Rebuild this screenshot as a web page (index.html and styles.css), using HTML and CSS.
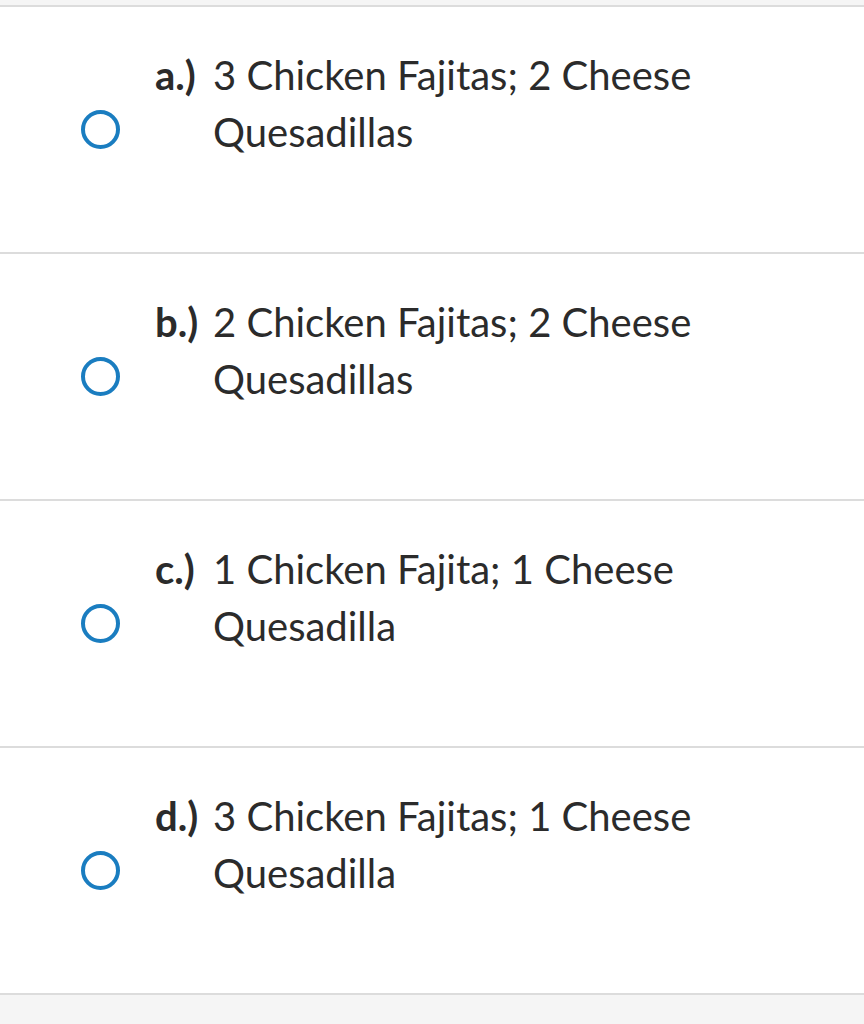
FILE: index.html
```html
<!DOCTYPE html>
<html>
<head>
<meta charset="utf-8">
<link rel="stylesheet" href="styles.css">
</head>
<body>
<div class="list">
  <div class="option">
    <span class="radio"></span>
    <div class="label"><span class="letter">a.)</span><span class="text">3 Chicken Fajitas; 2 Cheese Quesadillas</span></div>
  </div>
  <div class="option">
    <span class="radio"></span>
    <div class="label"><span class="letter">b.)</span><span class="text">2 Chicken Fajitas; 2 Cheese Quesadillas</span></div>
  </div>
  <div class="option">
    <span class="radio"></span>
    <div class="label"><span class="letter">c.)</span><span class="text">1 Chicken Fajita; 1 Cheese Quesadilla</span></div>
  </div>
  <div class="option">
    <span class="radio"></span>
    <div class="label"><span class="letter">d.)</span><span class="text">3 Chicken Fajitas; 1 Cheese Quesadilla</span></div>
  </div>
</div>
</body>
</html>
```

FILE: styles.css
```css
html, body {
  margin: 0;
  padding: 0;
  background: #f5f5f5;
  font-family: Lato, "Open Sans", sans-serif;
  color: #2b2b2b;
}
.list {
  margin-top: 5px;
  background: #fff;
  border-top: 2px solid #dcdcdc;
}
.option {
  height: 245px;
  border-bottom: 2px solid #dcdcdc;
  display: flex;
  align-items: center;
  box-sizing: content-box;
}
.radio {
  flex: none;
  width: 31px;
  height: 31px;
  border: 4px solid #1a7dc0;
  border-radius: 50%;
  margin-left: 81px;
  margin-right: 35px;
}
.label {
  align-self: flex-start;
  margin-top: 40px;
  display: grid;
  grid-template-columns: 58px 500px;
  font-size: 40px;
  line-height: 57px;
}
.letter {
  font-weight: 700;
}
```
